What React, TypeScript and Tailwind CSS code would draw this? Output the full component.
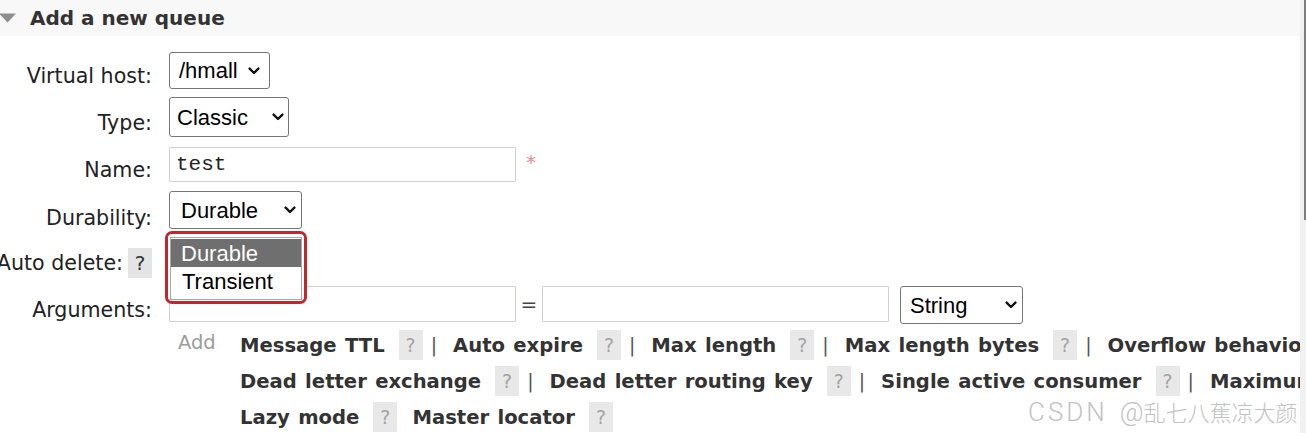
import React from "react";

function Chevron() {
  return (
    <svg width="12" height="8" viewBox="0 0 12 8" className="shrink-0">
      <path
        d="M1.6 1.6 L6 6 L10.4 1.6"
        fill="none"
        stroke="#111"
        strokeWidth="2.4"
        strokeLinecap="round"
        strokeLinejoin="round"
      />
    </svg>
  );
}

function FakeSelect({ text, className }: { text: string; className: string }) {
  return (
    <div
      className={
        "flex items-center justify-between border border-[#767676] rounded-[3px] bg-white text-[22px] text-black font-['Liberation_Sans',Arial,sans-serif] whitespace-nowrap " +
        className
      }
    >
      <span>{text}</span>
      <Chevron />
    </div>
  );
}

type Item = { t: string; pipe: boolean };

function LinkRow({ items }: { items: Item[] }) {
  return (
    <div className="flex items-center h-[30px] whitespace-nowrap">
      {items.map((it, i) => (
        <React.Fragment key={i}>
          <span className="font-bold text-[19.6px] leading-[30px] pt-[1px] text-[#333] [word-spacing:1.5px]">
            {it.t}
          </span>
          <span className="ml-[14px] w-[24px] h-[30px] shrink-0 bg-[#e8e8e8] text-[#a3a3a3] text-[19px] flex items-center justify-center">
            ?
          </span>
          {it.pipe ? (
            <span className="ml-[8px] mr-[16px] text-[19px] text-[#555]">|</span>
          ) : (
            <span className="w-[15px] shrink-0" />
          )}
        </React.Fragment>
      ))}
    </div>
  );
}

export default function App() {
  const labelCls =
    "w-[152px] shrink-0 flex justify-end text-[20.6px] leading-[24px] text-[#222] whitespace-nowrap";
  const inputCls = "w-[347px] border-[1.5px] border-[#d2d2d2] rounded-[1px] bg-white";

  return (
    <div className="flex w-[1306px] h-[433px] bg-white overflow-hidden font-['DejaVu_Sans',Verdana,sans-serif]">
      <div className="relative w-[1300px] h-[433px] overflow-hidden">
        {/* header */}
        <div className="h-[36px] bg-[#f8f8f8] flex items-center">
          <svg width="17" height="10" viewBox="0 0 17 10" className="ml-[-1px] shrink-0">
            <polygon points="0,0.5 17,0.5 8.5,9.5" fill="#8e8e8e" />
          </svg>
          <span className="ml-[14px] text-[20px] font-bold leading-[24px] text-[#333]">
            Add a new queue
          </span>
        </div>

        {/* form */}
        <div className="pt-[16px] flex flex-col">
          <div className="flex h-[45px]">
            <div className={labelCls + " mt-[12px]"}>Virtual host:</div>
            <div className="ml-[17px]">
              <FakeSelect text="/hmall" className="w-[101px] h-[37px] pl-[9px] pr-[9px]" />
            </div>
          </div>

          <div className="flex h-[50px]">
            <div className={labelCls + " mt-[14px]"}>Type:</div>
            <div className="ml-[17px]">
              <FakeSelect text="Classic" className="w-[120px] h-[40px] pl-[7px] pr-[4px]" />
            </div>
          </div>

          <div className="flex h-[44px]">
            <div className={labelCls + " mt-[11px]"}>Name:</div>
            <div className="ml-[17px] flex items-start">
              <div className={inputCls + " h-[35px] flex items-center pl-[6px]"}>
                <span className="font-['Liberation_Mono','Courier_New',monospace] text-[21px] text-[#222]">
                  test
                </span>
              </div>
              <span className="ml-[10px] mt-[3px] text-[20px] leading-[24px] text-[#f08c8c]">*</span>
            </div>
          </div>

          <div className="flex h-[57px]">
            <div className={labelCls + " mt-[15px]"}>Durability:</div>
            <div className="ml-[17px]">
              <FakeSelect text="Durable" className="w-[133px] h-[38px] pl-[11px] pr-[5px]" />
            </div>
          </div>

          <div className="flex h-[38px]">
            <div className="w-[152px] shrink-0 flex justify-end items-start whitespace-nowrap">
              <span className="mt-[3px] text-[20.6px] leading-[24px] text-[#222]">Auto delete:</span>
              <span className="ml-[5px] w-[24px] h-[30px] shrink-0 bg-[#e4e4e4] text-[#333] text-[20px] flex items-center justify-center">
                ?
              </span>
            </div>
          </div>

          <div className="flex h-[44px]">
            <div className={labelCls + " mt-[12px]"}>Arguments:</div>
            <div className="ml-[17px] flex items-start">
              <div className={inputCls + " h-[36px]"} />
              <span className="w-[26px] h-[36px] flex items-center justify-center text-[20px] text-[#444]">
                =
              </span>
              <div className={inputCls + " h-[36px]"} />
              <FakeSelect text="String" className="ml-[11px] w-[123px] h-[38px] pl-[9px] pr-[5px]" />
            </div>
          </div>

          {/* add links */}
          <div className="flex pl-[178px]">
            <div className="w-[62px] shrink-0 text-[19.5px] leading-[26px] text-[#9c9c9c]">Add</div>
            <div className="flex flex-col gap-[6px]">
              <LinkRow
                items={[
                  { t: "Message TTL", pipe: true },
                  { t: "Auto expire", pipe: true },
                  { t: "Max length", pipe: true },
                  { t: "Max length bytes", pipe: true },
                  { t: "Overflow behaviour", pipe: true },
                ]}
              />
              <LinkRow
                items={[
                  { t: "Dead letter exchange", pipe: true },
                  { t: "Dead letter routing key", pipe: true },
                  { t: "Single active consumer", pipe: true },
                  { t: "Maximum priority", pipe: true },
                ]}
              />
              <LinkRow
                items={[
                  { t: "Lazy mode", pipe: false },
                  { t: "Master locator", pipe: false },
                ]}
              />
            </div>
          </div>
        </div>

        {/* open dropdown with red annotation frame */}
        <div className="absolute left-[165px] top-[231px] w-[142px] h-[73px] border-[3px] border-[#c1272d] rounded-[7px] bg-white pl-[2px] pt-[3px]">
          <div className="w-[132px] h-[63px] border border-[#a8a8a8] bg-white pt-[1px] font-['Liberation_Sans',Arial,sans-serif] text-[22px]">
            <div className="h-[28px] bg-[#6f6f6f] text-white flex items-center pl-[10px]">Durable</div>
            <div className="h-[28px] text-black flex items-center pl-[11px]">Transient</div>
          </div>
        </div>

        {/* watermark */}
        <div className="absolute left-[1028px] top-[398px] whitespace-nowrap leading-[26px] text-[#c2c2c2]">
          <span className="font-['Roboto',sans-serif] font-light text-[26px] tracking-[3px]">CSDN</span>
          <span className="font-['Roboto',sans-serif] font-light text-[26px] ml-[12px]">@</span>
          <span className="font-['Noto_Sans_CJK_SC',sans-serif] font-light text-[22px]">乱七八蕉凉大颜</span>
        </div>
      </div>

      {/* scrollbar strip */}
      <div className="w-[6px] h-[433px] bg-[#f1f1f1] flex flex-col items-end">
        <div className="w-[2px] h-[220px] bg-[#7d7d7d]" />
      </div>
    </div>
  );
}
